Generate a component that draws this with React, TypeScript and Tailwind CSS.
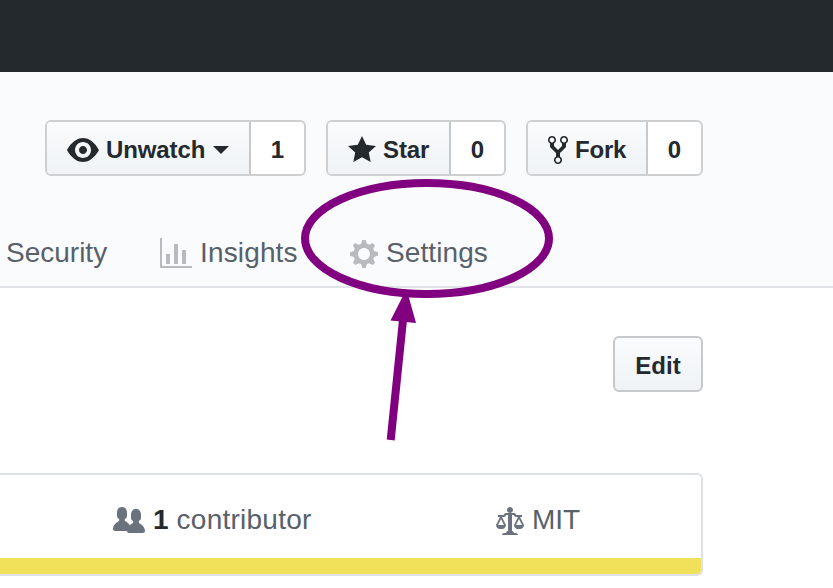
import type { ReactNode } from "react";

const paths = {
  eye: "M8.06 2C3 2 0 8 0 8s3 6 8.06 6C13 14 16 8 16 8s-3-6-7.94-6zM8 12c-2.2 0-4-1.78-4-4 0-2.2 1.8-4 4-4 2.22 0 4 1.8 4 4 0 2.22-1.78 4-4 4zm2-4c0 1.11-.89 2-2 2-1.11 0-2-.89-2-2 0-1.11.89-2 2-2 1.11 0 2 .89 2 2z",
  star: "M14 6l-4.9-.64L7 1 4.9 5.36 0 6l3.6 3.26L2.67 14 7 11.67 11.33 14l-.93-4.74L14 6z",
  fork: "M8 1a1.993 1.993 0 00-1 3.72V6L5 8 3 6V4.72A1.993 1.993 0 002 1a1.993 1.993 0 00-1 3.72V6.5l3 3v1.78A1.993 1.993 0 005 15a1.993 1.993 0 001-3.72V9.5l3-3V4.72A1.993 1.993 0 008 1zM2 4.2C1.34 4.2.8 3.65.8 3c0-.65.55-1.2 1.2-1.2.65 0 1.2.55 1.2 1.2 0 .65-.55 1.2-1.2 1.2zm3 10c-.66 0-1.2-.55-1.2-1.2 0-.65.55-1.2 1.2-1.2.65 0 1.2.55 1.2 1.2 0 .65-.55 1.2-1.2 1.2zm3-10c-.66 0-1.2-.55-1.2-1.2 0-.65.55-1.2 1.2-1.2.65 0 1.2.55 1.2 1.2 0 .65-.55 1.2-1.2 1.2z",
  graph: "M16 14v1H0V0h1v14h15zM5 13H3V8h2v5zm4 0H7V3h2v10zm4 0h-2V6h2v7z",
  gear: "M14 8.77v-1.6l-1.94-.64-.45-1.09.88-1.84-1.13-1.13-1.81.91-1.09-.45-.69-1.92h-1.6l-.63 1.94-1.11.45-1.84-.88-1.13 1.13.91 1.81-.45 1.09L0 7.23v1.59l1.94.64.45 1.09-.88 1.84 1.13 1.13 1.81-.91 1.09.45.69 1.92h1.59l.63-1.94 1.11-.45 1.84.88 1.13-1.13-.92-1.81.47-1.09L14 8.75v.02zM7 11c-1.66 0-3-1.34-3-3s1.34-3 3-3 3 1.34 3 3-1.34 3-3 3z",
  people: "M16 12.999c0 .439-.45 1-1 1H7.995c-.539 0-.994-.447-.995-.999H1c-.54 0-1-.561-1-1 0-2.634 3-4 3-4s.229-.409 0-1c-.841-.621-1.058-.59-1-3 .058-2.419 1.367-3 2.5-3s2.442.58 2.5 3c.058 2.41-.159 2.379-1 3-.229.59 0 1 0 1s1.549.711 2.42 2.088C9.196 9.369 10 8.999 10 8.999s.229-.409 0-1c-.841-.62-1.058-.59-1-3 .058-2.419 1.367-3 2.5-3s2.437.581 2.495 3c.059 2.41-.158 2.38-1 3-.229.59 0 1 0 1s3.005 1.366 3.005 4",
  law: "M7 4c-.83 0-1.5-.67-1.5-1.5S6.17 1 7 1s1.5.67 1.5 1.5S7.83 4 7 4zm7 6c0 1.11-.89 2-2 2h-1c-1.11 0-2-.89-2-2l2-4h-1c-.55 0-1-.45-1-1H8v8c.42 0 1 .45 1 1h1c.42 0 1 .45 1 1H3c0-.55.58-1 1-1h1c0-.55.58-1 1-1h.03L6 5H5c0 .55-.45 1-1 1H3l2 4c0 1.11-.89 2-2 2H2c-1.11 0-2-.89-2-2l2-4H1V5h3c0-.55.45-1 1-1h4c.55 0 1 .45 1 1h3v1h-1l2 4zM2.5 7L1 10h3L2.5 7zM13 10l-1.5-3-1.5 3h3z",
};

function Icon({ name, w, className = "" }: { name: keyof typeof paths; w: number; className?: string }) {
  return (
    <svg width={w * 2} height={32} viewBox={`0 0 ${w} 16`} fill="currentColor" className={`shrink-0 ${className}`}>
      <path fillRule="evenodd" d={paths[name]} />
    </svg>
  );
}

function CountButton({ children, count, className }: { children: ReactNode; count: number; className: string }) {
  return (
    <div className={`flex h-14 overflow-hidden rounded-md border-2 border-[#cdcfd1] bg-white text-2xl font-bold ${className}`}>
      <button className="flex flex-1 items-center border-r-2 border-[#c5cacd] bg-linear-to-b from-[#fafbfc] to-[#eff3f6] pl-5 pt-1">
        {children}
      </button>
      <span className="flex w-[53px] items-center justify-center pt-1">{count}</span>
    </div>
  );
}

export default function App() {
  return (
    <div className="relative h-[588px] w-[833px] overflow-hidden bg-white font-['Liberation_Sans',Arial,sans-serif] text-[#24292e]">
      <div className="h-[72px] bg-[#24292e]" />
      <header className="h-[216px] border-b-2 border-[#e1e4e8] bg-[#fafbfc] pt-12">
        <div className="flex gap-5 pl-[45px]">
          <CountButton count={1} className="w-[261px]">
            <Icon name="eye" w={16} />
            <span className="ml-[7px] tracking-[-0.1px]">Unwatch</span>
            <span className="ml-2 border-x-8 border-t-8 border-x-transparent border-t-[#24292e]" />
          </CountButton>
          <CountButton count={0} className="w-[180px]">
            <Icon name="star" w={14} />
            <span className="ml-[7px] tracking-[-0.1px]">Star</span>
          </CountButton>
          <CountButton count={0} className="w-[177px]">
            <Icon name="fork" w={10} />
            <span className="ml-[7px] tracking-[-0.2px]">Fork</span>
          </CountButton>
        </div>
        <nav className="mt-14 flex h-10 items-center pl-1.5 text-[28px] text-[#586069]">
          <span className="w-[154px] pt-0.5">Security</span>
          <div className="flex w-[190px] items-center">
            <Icon name="graph" w={16} className="mt-1 text-[#b8babd]" />
            <span className="ml-2 pt-0.5 tracking-[0.15px]">Insights</span>
          </div>
          <div className="flex items-center">
            <Icon name="gear" w={14} className="mt-1 text-[#b8babd]" />
            <span className="ml-2 pt-0.5 tracking-[0.1px]">Settings</span>
          </div>
        </nav>
      </header>
      <main className="w-[703px]">
        <div className="flex justify-end pt-12">
          <button className="h-14 w-[90px] rounded-md border-2 border-[#c5c9cc] bg-linear-to-b from-[#fafbfc] to-[#eff3f6] pt-[3px] text-2xl font-bold">
            Edit
          </button>
        </div>
        <section className="mt-[81px] h-[103px] overflow-hidden rounded-r-md border-y-2 border-r-2 border-[#dfe2e5]">
          <div className="flex h-[83px] items-center pb-px pl-[113px] pt-2.5 text-[28px] text-[#586069]">
            <div className="flex w-[383px] items-center">
              <Icon name="people" w={16} className="text-[#6a737d]" />
              <b className="ml-2 pb-[3px] text-[#24292e]">1</b>
              <span className="ml-2 pb-[3px] tracking-[0.25px]">contributor</span>
            </div>
            <div className="flex items-center">
              <Icon name="law" w={14} className="text-[#6a737d]" />
              <span className="ml-2 pb-[3px]">MIT</span>
            </div>
          </div>
          <div className="h-4 bg-[#f1e05a]" />
        </section>
      </main>
      <svg width="833" height="588" className="pointer-events-none absolute inset-0">
        <ellipse cx="427" cy="238.5" rx="122" ry="55.5" fill="none" stroke="#800080" strokeWidth="8" />
        <path d="M390.7 440L403 320" stroke="#800080" strokeWidth="8" />
        <path d="M406.5 289L390.5 320.5L416 323Z" fill="#800080" />
      </svg>
    </div>
  );
}
